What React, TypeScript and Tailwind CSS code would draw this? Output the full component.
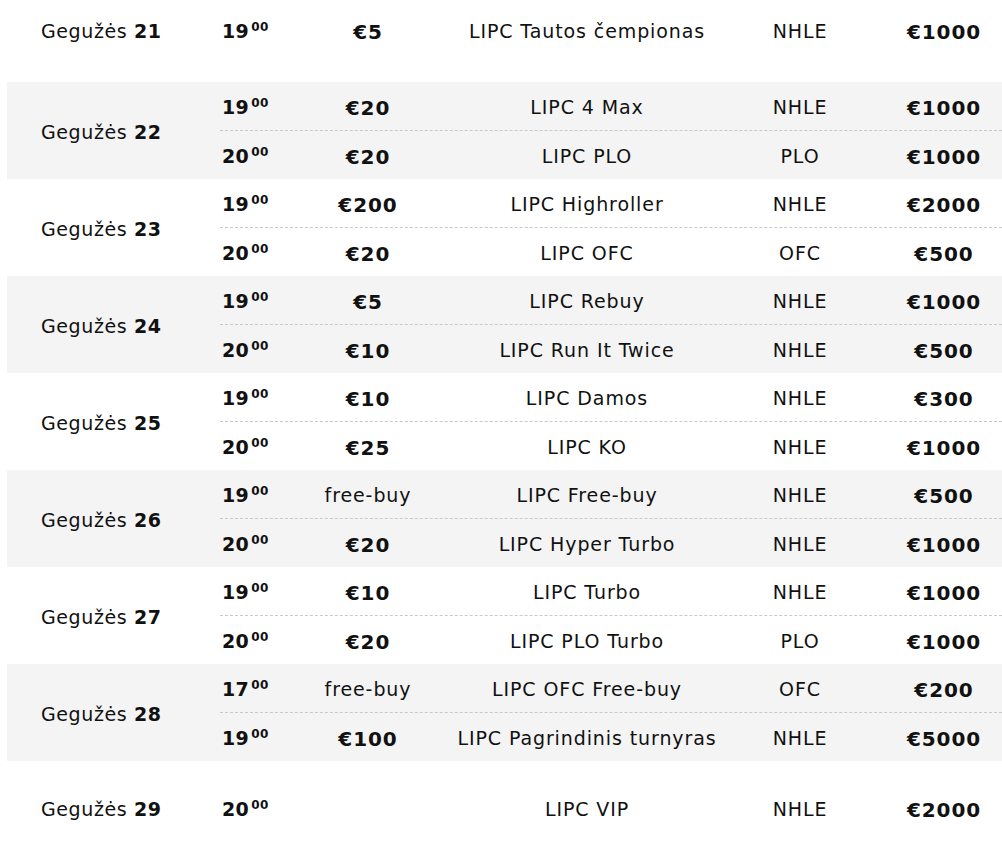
const font = { fontFamily: "'DejaVu Sans', 'Noto Sans', sans-serif" };

type Event = { time: string; buyIn: string; name: string; game: string; prize: string };
type Day = { day: number; events: Event[]; shaded?: boolean };

const days: Day[] = [
  { day: 21, events: [{ time: "19", buyIn: "€5", name: "LIPC Tautos čempionas", game: "NHLE", prize: "€1000" }] },
  {
    day: 22,
    shaded: true,
    events: [
      { time: "19", buyIn: "€20", name: "LIPC 4 Max", game: "NHLE", prize: "€1000" },
      { time: "20", buyIn: "€20", name: "LIPC PLO", game: "PLO", prize: "€1000" },
    ],
  },
  {
    day: 23,
    events: [
      { time: "19", buyIn: "€200", name: "LIPC Highroller", game: "NHLE", prize: "€2000" },
      { time: "20", buyIn: "€20", name: "LIPC OFC", game: "OFC", prize: "€500" },
    ],
  },
  {
    day: 24,
    shaded: true,
    events: [
      { time: "19", buyIn: "€5", name: "LIPC Rebuy", game: "NHLE", prize: "€1000" },
      { time: "20", buyIn: "€10", name: "LIPC Run It Twice", game: "NHLE", prize: "€500" },
    ],
  },
  {
    day: 25,
    events: [
      { time: "19", buyIn: "€10", name: "LIPC Damos", game: "NHLE", prize: "€300" },
      { time: "20", buyIn: "€25", name: "LIPC KO", game: "NHLE", prize: "€1000" },
    ],
  },
  {
    day: 26,
    shaded: true,
    events: [
      { time: "19", buyIn: "free-buy", name: "LIPC Free-buy", game: "NHLE", prize: "€500" },
      { time: "20", buyIn: "€20", name: "LIPC Hyper Turbo", game: "NHLE", prize: "€1000" },
    ],
  },
  {
    day: 27,
    events: [
      { time: "19", buyIn: "€10", name: "LIPC Turbo", game: "NHLE", prize: "€1000" },
      { time: "20", buyIn: "€20", name: "LIPC PLO Turbo", game: "PLO", prize: "€1000" },
    ],
  },
  {
    day: 28,
    shaded: true,
    events: [
      { time: "17", buyIn: "free-buy", name: "LIPC OFC Free-buy", game: "OFC", prize: "€200" },
      { time: "19", buyIn: "€100", name: "LIPC Pagrindinis turnyras", game: "NHLE", prize: "€5000" },
    ],
  },
  { day: 29, events: [{ time: "20", buyIn: "", name: "LIPC VIP", game: "NHLE", prize: "€2000" }] },
];

function EventRow({ ev, first }: { ev: Event; first: boolean }) {
  return (
    <div
      className={
        "flex items-center pt-[3px] " +
        (first ? "h-[48px]" : "h-[49px] border-t border-dashed border-[#c9c9c9]")
      }
    >
      <div className="w-[80px] pl-[2px] font-bold flex items-start leading-none text-[19px] tracking-[0.4px]">
        <span>{ev.time}</span>
        <span className="text-[12px] font-bold ml-[2px] -mt-[1px]">00</span>
      </div>
      <div className="w-[136px] text-center">
        <span className={ev.buyIn.startsWith("€") ? "font-bold text-[20px]" : ""}>{ev.buyIn}</span>
      </div>
      <div className="w-[302px] text-center">{ev.name}</div>
      <div className="w-[124px] text-center">{ev.game}</div>
      <div className="w-[140px] pl-[24px] text-center font-bold text-[20px]">{ev.prize}</div>
    </div>
  );
}

function DayBlock({ d }: { d: Day }) {
  return (
    <div className={"flex items-center " + (d.shaded ? "bg-[#f4f4f4]" : "")}>
      <div className="w-[213px] pl-[34px] pt-[3px] tracking-[0.6px]">
        Gegužės <span className="font-bold">{d.day}</span>
      </div>
      <div className="flex-1 flex flex-col">
        {d.events.map((ev, i) => (
          <EventRow key={i} ev={ev} first={i === 0} />
        ))}
      </div>
    </div>
  );
}

export default function App() {
  return (
    <div
      className="w-[1002px] h-[842px] bg-white overflow-hidden text-[#111] text-[19px] tracking-[0.9px]"
      style={font}
    >
      <div className="ml-[7px] pt-[6px] flex flex-col">
        <DayBlock d={days[0]} />
        <div className="h-[28px]" />
        {days.slice(1, 8).map((d) => (
          <DayBlock key={d.day} d={d} />
        ))}
        <div className="h-[23px]" />
        <DayBlock d={days[8]} />
      </div>
    </div>
  );
}
